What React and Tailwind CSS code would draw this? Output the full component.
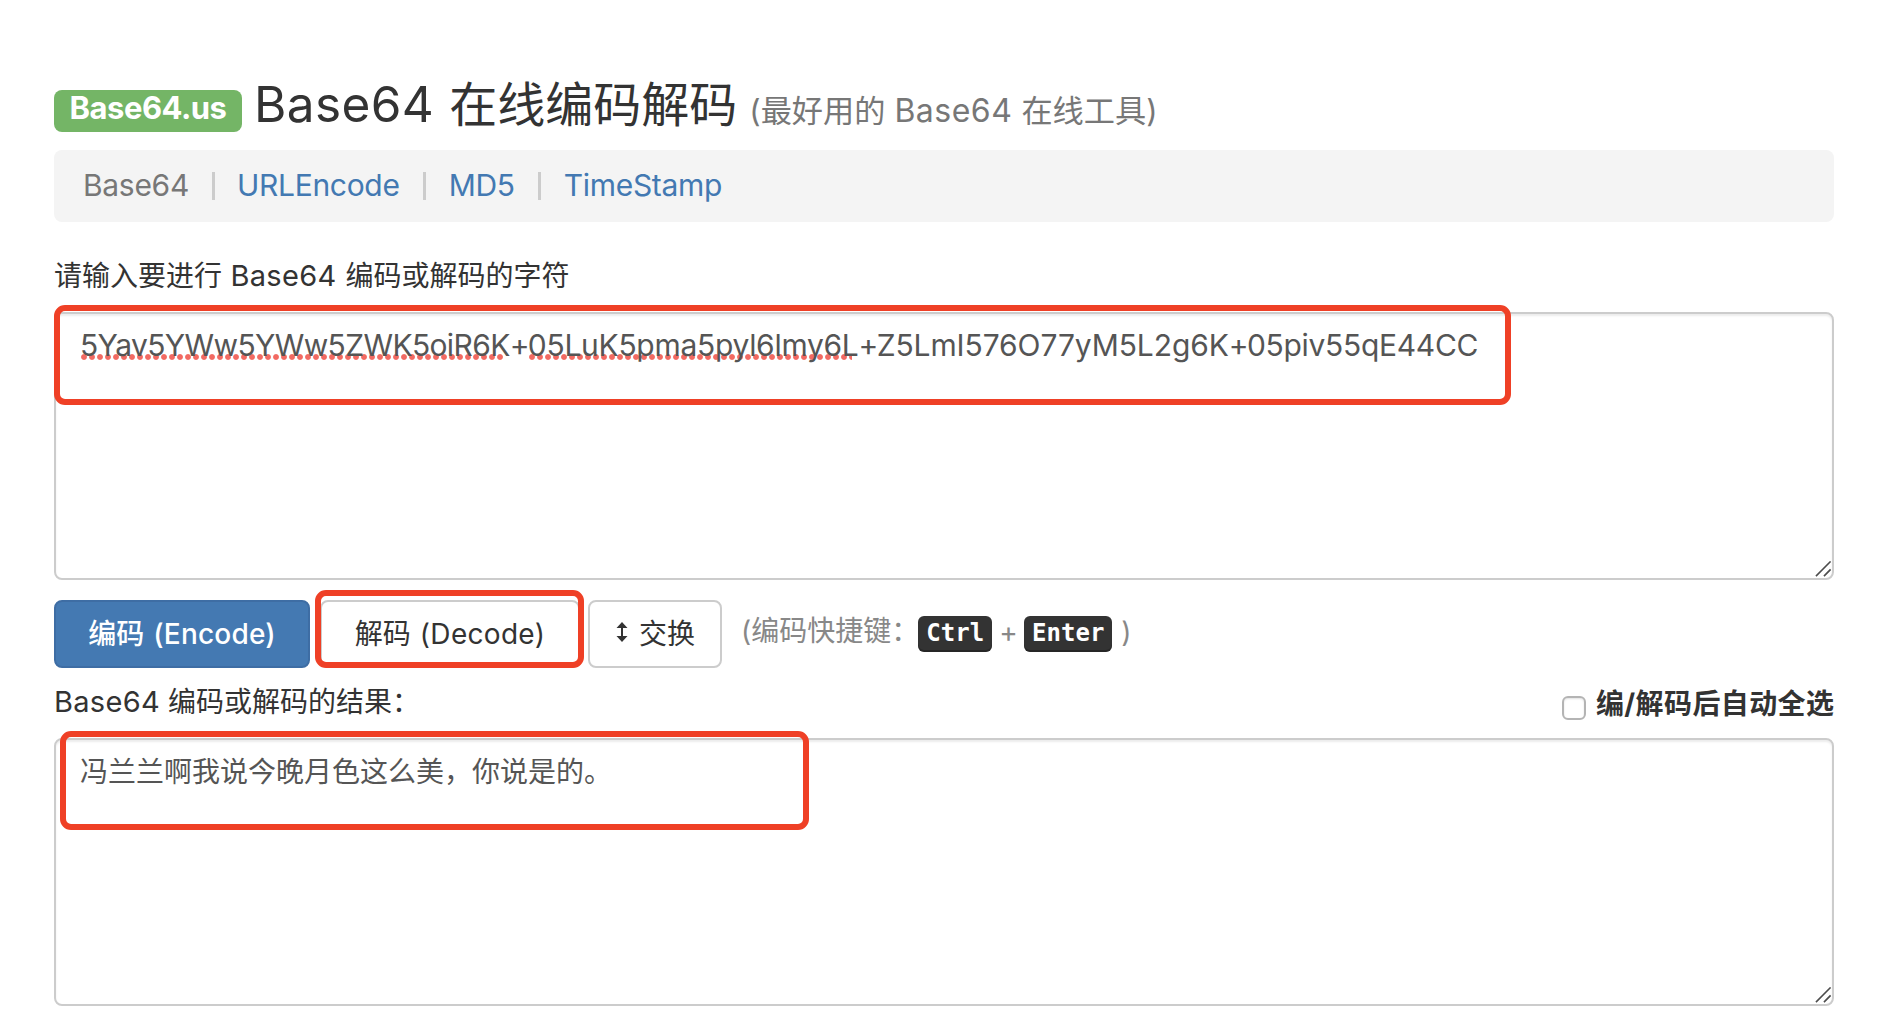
import React from "react";

function ResizeGrip() {
  return (
    <svg className="absolute right-px bottom-px size-4" viewBox="0 0 16 16" stroke="#4c4c4c" strokeWidth="1.6" strokeLinecap="square">
      <path d="M1.5 14.5 15 1M9.5 14.5 15 9" />
    </svg>
  );
}

function Misspelled({ children, className }) {
  return (
    <span className={`relative inline-block ${className}`}>
      <span className="absolute top-[31px] left-0 h-[6px] w-[calc(100%-7px)] bg-[radial-gradient(circle_at_center,#f26a62_2.4px,transparent_3.4px)] bg-[length:8px_6px] bg-repeat-x" />
      <span className="relative">{children}</span>
    </span>
  );
}

function NavDivider() {
  return <span className="ml-[23px] h-7 w-[3px] bg-[#cccccc]" />;
}

function Key({ children, className }) {
  return (
    <kbd className={`mt-[16px] flex h-[36px] justify-center rounded-md bg-[#333333] font-['DejaVu_Sans_Mono',monospace] text-[24px] leading-[34px] font-bold text-white shadow-[inset_0_-2px_0_rgba(0,0,0,0.25)] ${className}`}>
      {children}
    </kbd>
  );
}

export default function App() {
  return (
    <main className="h-[1020px] w-[1890px] overflow-hidden bg-white pt-[76px] pr-[56px] pl-[54px] font-['Inter','Noto_Sans_CJK_SC',sans-serif] text-[28px] font-[370] text-[#333333]">
      <header className="flex h-[74px] items-start">
        <span className="mt-[14px] flex h-[42px] w-[188px] justify-center rounded-lg bg-[#74b566] text-[31px] leading-[35px] font-bold tracking-[-0.5px] text-white">Base64.us</span>
        <h1 className="ml-[12px] flex items-baseline text-[48px] leading-[56px] whitespace-pre">
          <span className="text-[49.5px] tracking-[0.4px]">Base64</span>
          <span className="ml-[15px]">在线编码解码</span>
          <small className="ml-[12px] flex items-baseline text-[31.2px] text-[#777777]">
            <span>(最好用的</span>
            <span className="ml-[9px] text-[32px] tracking-[0.5px]">Base64</span>
            <span className="ml-[9px]">在线工具)</span>
          </small>
        </h1>
      </header>

      <nav className="flex h-[72px] items-center rounded-lg bg-[#f4f4f4] pl-[29px] text-[30px] leading-[70px] tracking-[-0.3px] text-[#4379b2]">
        <span className="-mt-0.5 text-[#777777]">Base64</span>
        <NavDivider />
        <a className="-mt-0.5 ml-[22px]">URLEncode</a>
        <NavDivider />
        <a className="-mt-0.5 ml-[23px]">MD5</a>
        <NavDivider />
        <a className="-mt-0.5 ml-[23px]">TimeStamp</a>
      </nav>

      <label className="mt-[34px] flex h-[40px] items-baseline leading-[40px]">
        <span>请输入要进行</span>
        <span className="ml-[8.5px] text-[29px] tracking-[0.3px]">Base64</span>
        <span className="ml-[9px]">编码或解码的字符</span>
      </label>

      <section className="relative mt-[16px] h-[268px] rounded-lg border-2 border-[#cccccc] pt-[9px] pl-[24px] text-[30px] leading-[44px] tracking-[-0.2px] text-[#555555] shadow-[inset_0_2px_2px_rgba(0,0,0,0.075)]">
        <p className="flex">
          <Misspelled className="tracking-[-0.63px]">5Yav5YWw5YWw5ZWK5oiR6K</Misspelled>
          <span className="tracking-[-1.7px]">+</span>
          <Misspelled className="tracking-[-0.29px]">05LuK5pma5pyl6lmy6L</Misspelled>
          <span className="tracking-[-1.7px]">+</span>
          <span className="tracking-[-0.1px]">Z5LmI576O77yM5L2g6K</span>
          <span className="tracking-[-1.7px]">+</span>
          <span className="tracking-[-0.3px]">05piv55qE44CC</span>
        </p>
        <ResizeGrip />
        <div className="absolute -top-[9px] -left-[2px] h-[100px] w-[1457px] rounded-[11px] border-[6px] border-[#ef4026]" />
      </section>

      <div className="mt-[20px] flex h-[68px] leading-[64px]">
        <button className="flex w-[256px] items-baseline justify-center rounded-lg border-2 border-[#3e6da4] bg-[#4479b2] font-[450] text-white">
          <span>编码</span>
          <span className="ml-[9px] tracking-[0.2px]">(Encode)</span>
        </button>
        <div className="relative ml-[10px]">
          <button className="flex h-[68px] w-[260px] items-baseline justify-center rounded-lg border-2 border-[#cccccc]">
            <span>解码</span>
            <span className="ml-[9px] tracking-[0.3px]">(Decode)</span>
          </button>
          <div className="absolute -top-[10px] -left-[5px] h-[78px] w-[269px] rounded-[11px] border-[6px] border-[#ef4026]" />
        </div>
        <button className="ml-[8px] flex w-[134px] items-center rounded-lg border-2 border-[#cccccc] pl-[26px]">
          <svg className="-mt-[4px] h-[20px] w-[12px]" viewBox="0 0 12 20" fill="#333333">
            <path d="M6 0 11.5 6H7V14H11.5L6 20 .5 14H5V6H.5Z" />
          </svg>
          <span className="ml-[11px]">交换</span>
        </button>
        <div className="ml-[19px] flex items-start leading-[63px] text-[#888888]">
          <span>(编码快捷键：</span>
          <Key className="-ml-px w-[74px]">Ctrl</Key>
          <span className="ml-[7px] w-[17px] leading-[64px]">+</span>
          <Key className="ml-[8px] w-[88px]">Enter</Key>
          <span className="ml-[9px] leading-[64px]">)</span>
        </div>
      </div>

      <div className="mt-[14px] flex h-[40px] items-start justify-between leading-[40px]">
        <div className="flex items-baseline">
          <span className="text-[29px] tracking-[0.3px]">Base64</span>
          <span className="ml-[8px]">编码或解码的结果：</span>
        </div>
        <label className="flex items-start font-bold">
          <span className="mt-[14px] mr-[10px] size-6 rounded-[6px] border-2 border-[#b4b4b4] shadow-[inset_0_1px_2px_rgba(0,0,0,0.12)]" />
          <span className="mt-[2px] -mr-[0.4px] tracking-[0.4px]">编/解码后自动全选</span>
        </label>
      </div>

      <section className="relative mt-[16px] h-[268px] rounded-lg border-2 border-[#cccccc] pt-[10px] pl-[24px] leading-[44px] text-[#555555] shadow-[inset_0_2px_2px_rgba(0,0,0,0.075)]">
        <span>冯兰兰啊我说今晚月色这么美，你说是的。</span>
        <ResizeGrip />
        <div className="absolute -top-[9px] left-[4px] h-[99px] w-[749px] rounded-[11px] border-[6px] border-[#ef4026]" />
      </section>
    </main>
  );
}
